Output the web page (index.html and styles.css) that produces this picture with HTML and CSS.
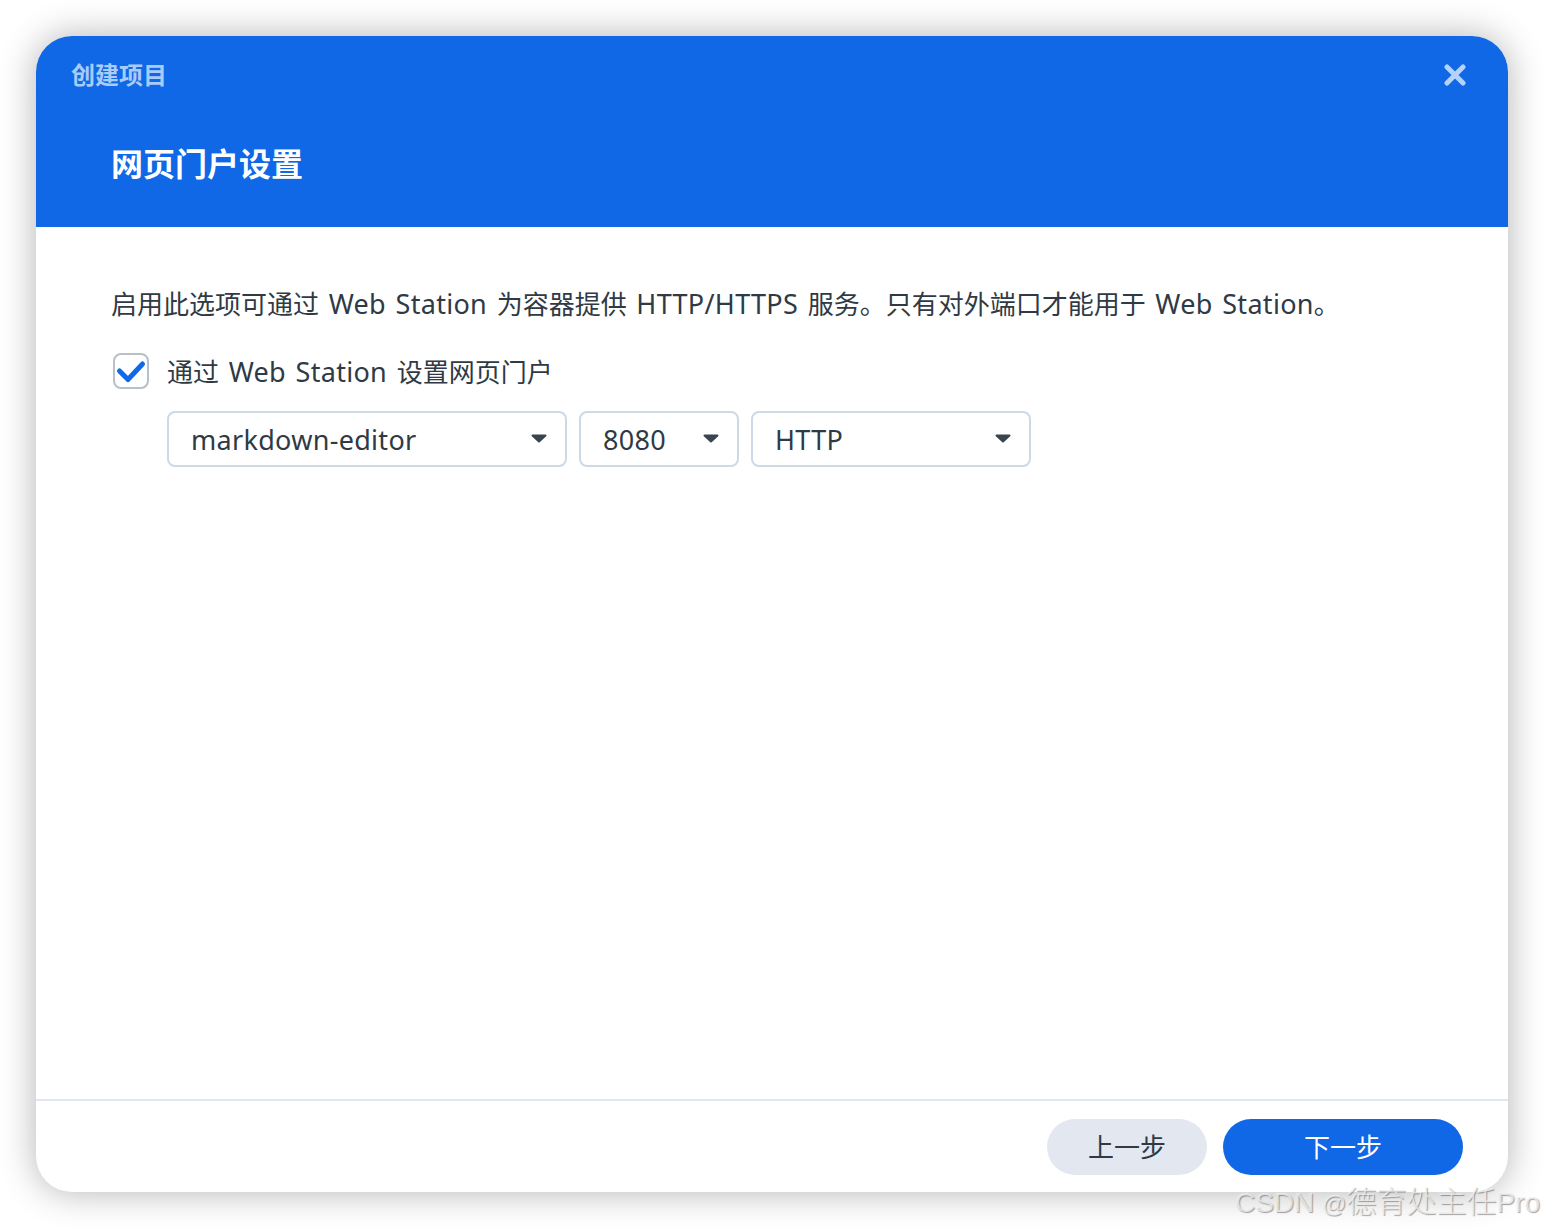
FILE: index.html
```html
<!DOCTYPE html>
<html lang="zh-CN">
<head>
<meta charset="utf-8">
<title>创建项目</title>
<link rel="stylesheet" href="styles.css">
</head>
<body>
<div class="dialog">
  <header class="head">
    <div class="head-top">
      <span class="app-title">创建项目</span>
      <button class="close" aria-label="关闭">
        <svg viewBox="0 0 22 22" width="22" height="22"><path d="M3 3 L19 19 M19 3 L3 19" fill="none" stroke="#b5d3fa" stroke-width="5" stroke-linecap="round"/></svg>
      </button>
    </div>
    <h1 class="step-title">网页门户设置</h1>
  </header>
  <main class="content">
    <p class="desc">启用此选项可通过<span class="en"> Web Station </span>为容器提供<span class="en"> HTTP/HTTPS </span>服务。只有对外端口才能用于<span class="en"> Web Station</span>。</p>
    <label class="check-row">
      <span class="checkbox">
        <svg viewBox="0 0 36 36" width="36" height="36"><path d="M6.5 18 L15 26.5 L29.5 11" fill="none" stroke="#1069e8" stroke-width="5" stroke-linecap="round" stroke-linejoin="round"/></svg>
      </span>
      <span class="check-label">通过<span class="en"> Web Station </span>设置网页门户</span>
    </label>
    <div class="selects">
      <div class="select w-name"><span class="en">markdown-editor</span><svg class="caret" viewBox="0 0 16 9" width="16" height="9"><path d="M1.5 .5 H14.5 a1 1 0 0 1 .7 1.7 L8.7 8.2 a1 1 0 0 1 -1.4 0 L.8 2.2 A1 1 0 0 1 1.5 .5z" fill="#3a4450"/></svg></div>
      <div class="select w-port"><span class="en">8080</span><svg class="caret" viewBox="0 0 16 9" width="16" height="9"><path d="M1.5 .5 H14.5 a1 1 0 0 1 .7 1.7 L8.7 8.2 a1 1 0 0 1 -1.4 0 L.8 2.2 A1 1 0 0 1 1.5 .5z" fill="#3a4450"/></svg></div>
      <div class="select w-proto"><span class="en">HTTP</span><svg class="caret" viewBox="0 0 16 9" width="16" height="9"><path d="M1.5 .5 H14.5 a1 1 0 0 1 .7 1.7 L8.7 8.2 a1 1 0 0 1 -1.4 0 L.8 2.2 A1 1 0 0 1 1.5 .5z" fill="#3a4450"/></svg></div>
    </div>
  </main>
  <footer class="foot">
    <button class="btn btn-sec">上一步</button>
    <button class="btn btn-pri">下一步</button>
  </footer>
</div>
<div class="watermark">CSDN <span class="wm-at">@</span><span class="wm-cjk">德育处主任</span>Pro</div>
</body>
</html>
```
FILE: styles.css
```css
* { box-sizing: border-box; }
html, body { margin: 0; height: 100%; background: #fff; overflow: hidden; }
body {
  position: relative;
  padding: 36px;
  width: 1544px;
  height: 1228px;
  font-family: "Noto Sans", "Noto Sans CJK SC", sans-serif;
  color: #2f3a45;
  font-size: 26px;
}
.en {
  font-size: 27px;
  letter-spacing: 0.3px;
  word-spacing: 2.3px;
}
.dialog {
  width: 1472px;
  height: 1156px;
  border-radius: 36px;
  background: #fff;
  overflow: hidden;
  display: flex;
  flex-direction: column;
  box-shadow: 0 0 36px rgba(0, 0, 0, 0.3);
}
.head {
  height: 191px;
  flex: none;
  background: #1068e6;
  padding: 0 36px 0 35px;
}
.head-top {
  height: 78px;
  display: flex;
  align-items: center;
  justify-content: space-between;
}
.app-title {
  font-size: 24px;
  font-weight: 700;
  color: #a9cbf9;
  line-height: 32px;
}
.close {
  width: 22px;
  height: 22px;
  padding: 0;
  border: 0;
  background: none;
  display: block;
  margin-right: 6px;
}
.close svg { display: block; }
.step-title {
  margin: 26px 0 0 40px;
  font-size: 32px;
  font-weight: 700;
  line-height: 48px;
  color: #fff;
}
.content {
  flex: 1;
  padding: 57px 75px 0;
}
.desc {
  margin: 0;
  line-height: 40px;
  white-space: nowrap;
}
.check-row {
  margin-top: 29px;
  display: flex;
  align-items: center;
  gap: 18px;
  height: 36px;
  padding-left: 2px;
  white-space: nowrap;
}
.checkbox {
  width: 36px;
  height: 36px;
  flex: none;
  border: 2px solid #b6bfca;
  border-radius: 8px;
  position: relative;
}
.checkbox svg { position: absolute; left: -2px; top: -2px; }
.selects {
  margin: 22px 0 0 56px;
  display: flex;
  gap: 12px;
}
.select {
  height: 56px;
  border: 2px solid #ccd9e6;
  border-radius: 8px;
  background: #fff;
  padding: 0 18px 0 22px;
  display: flex;
  align-items: center;
  justify-content: space-between;
  font-size: 26px;
}
.w-name { width: 400px; }
.w-port { width: 160px; }
.w-proto { width: 280px; }
.caret { display: block; flex: none; margin-bottom: 1px; }
.foot {
  height: 93px;
  flex: none;
  border-top: 2px solid #dfe6ee;
  padding: 18px 45px 0 0;
  display: flex;
  justify-content: flex-end;
  gap: 16px;
}
.btn {
  height: 56px;
  border: 0;
  border-radius: 28px;
  font-family: inherit;
  font-size: 26px;
  padding: 0 0 2px;
}
.btn-sec { width: 160px; background: #e3e8f0; color: #2f3a45; }
.btn-pri { width: 240px; background: #1068e6; color: #fff; }
.watermark {
  position: absolute;
  right: 4px;
  top: 1182px;
  font-family: "Liberation Sans", "Noto Sans CJK SC", sans-serif;
  font-size: 28px;
  line-height: 40px;
  white-space: nowrap;
  color: rgba(240, 240, 240, 0.8);
  text-shadow: 1px 1px 1px rgba(0, 0, 0, 0.35);
}
.wm-at { font-size: 24px; }
.wm-cjk { font-size: 30px; font-weight: 300; }
```
